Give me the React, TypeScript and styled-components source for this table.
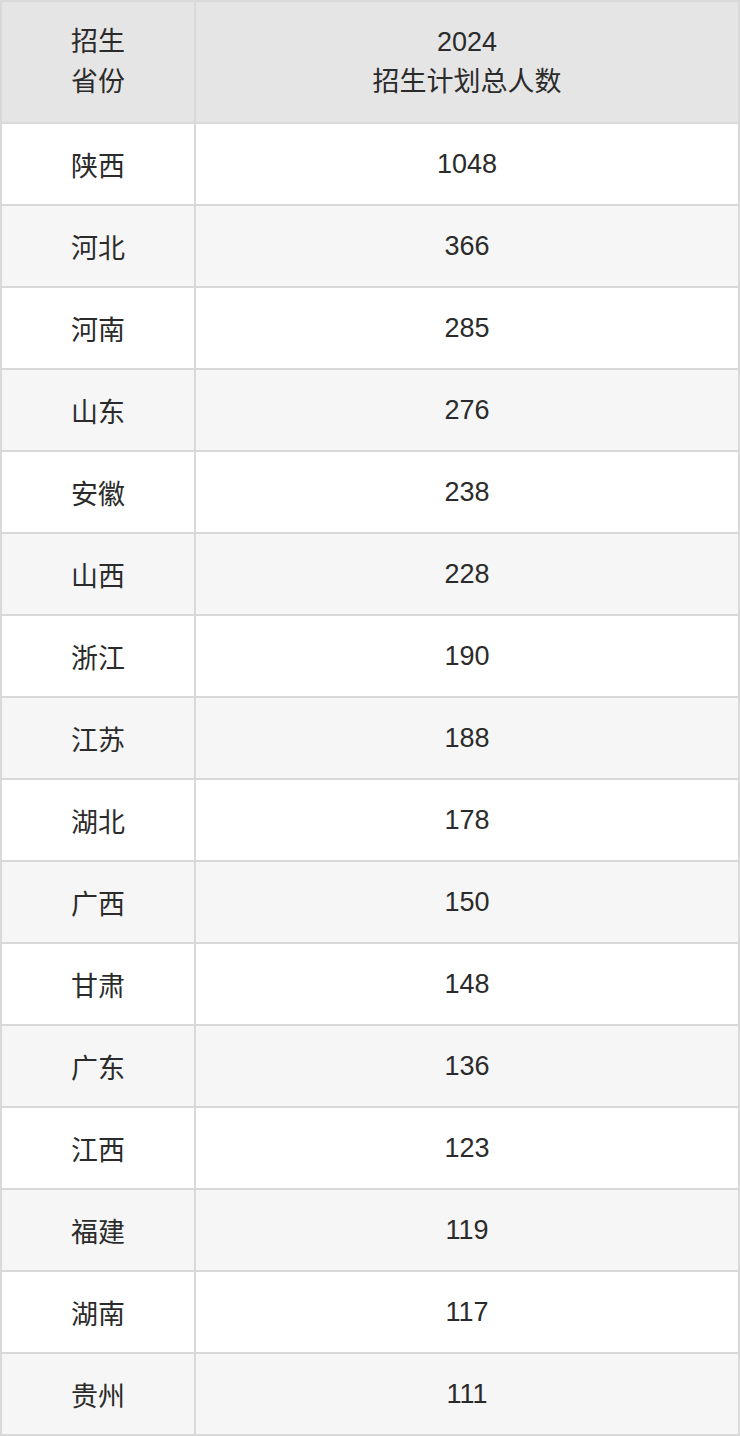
import React from "react";
import styled, { createGlobalStyle } from "styled-components";

const GlobalStyle = createGlobalStyle`
	html, body {
		margin: 0;
		padding: 0;
		background: #ffffff;
	}
	body {
		font-family: "Liberation Sans", "Noto Sans CJK SC", sans-serif;
		color: #333333;
	}
`;

const Table = styled.div`
	display: grid;
	grid-template-columns: 192px 1fr;
	grid-template-rows: 120px;
	grid-auto-rows: 80px;
	gap: 2px;
	padding: 2px;
	width: 740px;
	box-sizing: border-box;
	background-color: #d9d9d9;
`;

const HeadCell = styled.div`
	display: flex;
	align-items: center;
	justify-content: center;
	background-color: #e5e5e5;
	font-size: 27px;
	line-height: 40px;
	text-align: center;
	color: #2b2b2b;
`;

const Cell = styled.div<{ $striped: boolean }>`
	display: flex;
	align-items: center;
	justify-content: center;
	background-color: ${(p) => (p.$striped ? "#f6f6f6" : "#ffffff")};
	font-size: 27px;
	color: #2b2b2b;
`;

const rows: [string, number][] = [
	["陕西", 1048],
	["河北", 366],
	["河南", 285],
	["山东", 276],
	["安徽", 238],
	["山西", 228],
	["浙江", 190],
	["江苏", 188],
	["湖北", 178],
	["广西", 150],
	["甘肃", 148],
	["广东", 136],
	["江西", 123],
	["福建", 119],
	["湖南", 117],
	["贵州", 111],
];

export default function App() {
	return (
		<>
			<GlobalStyle />
			<Table>
				<HeadCell>
					招生
					<br />
					省份
				</HeadCell>
				<HeadCell>
					2024
					<br />
					招生计划总人数
				</HeadCell>
				{rows.map(([province, total], i) => (
					<React.Fragment key={province}>
						<Cell $striped={i % 2 === 1}>{province}</Cell>
						<Cell $striped={i % 2 === 1}>{total}</Cell>
					</React.Fragment>
				))}
			</Table>
		</>
	);
}
